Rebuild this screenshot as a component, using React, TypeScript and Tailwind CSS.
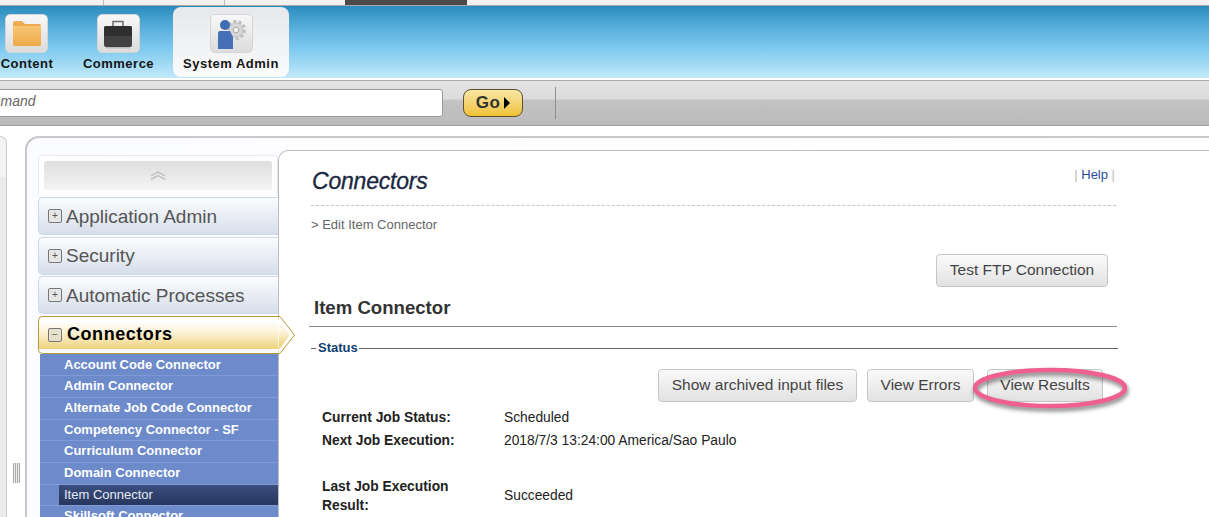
const font = { fontFamily: '"Liberation Sans", Arial, sans-serif' };

const subItems = [
  "Account Code Connector",
  "Admin Connector",
  "Alternate Job Code Connector",
  "Competency Connector - SF",
  "Curriculum Connector",
  "Domain Connector",
  "Item Connector",
  "Skillsoft Connector",
];

function FolderIcon() {
  return (
    <svg width="28" height="25" viewBox="0 0 28 25">
      <defs>
        <linearGradient id="folderFill" x1="0" y1="0" x2="0" y2="1">
          <stop offset="0" stopColor="#f8c670" />
          <stop offset="1" stopColor="#eeaa4c" />
        </linearGradient>
      </defs>
      <path d="M0 2a2 2 0 0 1 2-2h7l3 3h14a2 2 0 0 1 2 2v18a2 2 0 0 1-2 2H2a2 2 0 0 1-2-2z" fill="#eeac52" />
      <path d="M0 5h28v18a2 2 0 0 1-2 2H2a2 2 0 0 1-2-2z" fill="url(#folderFill)" />
    </svg>
  );
}

function CaseIcon() {
  return (
    <svg width="30" height="30" viewBox="0 0 30 30">
      <path d="M10 7V2.5h10V7" fill="none" stroke="#6b6b6b" strokeWidth="1.5" />
      <rect x="1" y="7" width="28" height="21" rx="2" fill="#414141" />
      <rect x="1" y="7" width="28" height="10" rx="2" fill="#2f2f2f" />
      <rect x="3" y="28" width="24" height="1.5" fill="#bbb" />
    </svg>
  );
}

function AdminIcon() {
  return (
    <svg width="32" height="34" viewBox="0 0 32 34">
      <circle cx="21" cy="13" r="7" fill="#d6d6d6" stroke="#c4c4c4" strokeWidth="1" />
      <circle cx="21" cy="13" r="8.5" fill="none" stroke="#bdbdbd" strokeWidth="3" strokeDasharray="3 2.3" />
      <circle cx="21" cy="13" r="2.8" fill="#f2f2f2" stroke="#aaa" strokeWidth="1" />
      <circle cx="10" cy="8" r="5" fill="#3f6db5" />
      <path d="M3 16a2 2 0 0 1 2-2h10l3 6v12H3z" fill="#4570b8" />
    </svg>
  );
}

function NavTile({ label, active, icon }: { label: string; active?: boolean; icon: React.ReactNode }) {
  return (
    <div className={`flex flex-col items-center rounded-lg pt-[7px] h-[70px] ${active ? "w-[116px] bg-gradient-to-b from-[#e6e8ec] to-[#fafbfc]" : ""}`}>
      <div className="flex items-center justify-center w-[43px] h-[39px] rounded-[5px] border border-[#d5d5d5] bg-gradient-to-b from-[#f8f8f8] to-[#dcdcdc]">
        {icon}
      </div>
      <span className="mt-[3px] text-[13px] font-bold text-[#151515] leading-[16px] tracking-[0.5px] whitespace-nowrap">{label}</span>
    </div>
  );
}

function AccordionItem({ label }: { label: string }) {
  return (
    <div className="flex items-center h-[38px] pl-[9px] mb-[1.5px] rounded-l-[5px] border border-r-0 border-[#cdd8ec] bg-gradient-to-b from-[#fbfcfe] to-[#d7deeb]">
      <span className="flex items-center justify-center w-[14px] h-[14px] rounded-[2px] border border-[#777] bg-[#e6e6e6] text-[10px] leading-none text-[#555]">+</span>
      <span className="ml-[4px] text-[19px] text-[#555] leading-none whitespace-nowrap">{label}</span>
    </div>
  );
}

function GrayButton({ label, className = "" }: { label: string; className?: string }) {
  return (
    <button className={`h-[33px] rounded-[4px] border border-[#c6c6c6] bg-gradient-to-b from-[#fafafa] to-[#e2e2e2] pb-[1px] text-[15.5px] text-[#444] whitespace-nowrap ${className}`}>
      {label}
    </button>
  );
}

export default function App() {
  return (
    <div style={font} className="h-[517px] w-[1209px] overflow-hidden bg-white flex flex-col">
      {/* top tabs */}
      <div className="flex h-[6px] bg-[#f2f2f2] border-b border-[#a9a9a9]">
        <div className="w-[104px] border-r border-[#bbb]" />
        <div className="w-[121px] border-r border-[#bbb]" />
        <div className="w-[120px]" />
        <div className="w-[122px] bg-[#4a4a4a]" />
      </div>

      {/* module nav */}
      <div className="flex items-start h-[74px] pt-[1px] pl-[2px] border-b-2 border-white bg-[linear-gradient(#2a8cbd_0%,#5fb4e0_35%,#7fcaf0_60%,#c3e8fa_100%)]">
        <div className="w-[54px] -ml-[2px] flex justify-center"><NavTile label="Content" icon={<FolderIcon />} /></div>
        <div className="w-[119px] pl-[10px] flex justify-center"><NavTile label="Commerce" icon={<CaseIcon />} /></div>
        <NavTile label="System Admin" active icon={<AdminIcon />} />
      </div>

      {/* command bar */}
      <div className="flex items-center h-[46px] border-t border-[#a8a8a8] border-b border-b-[#a0a0a0] bg-[linear-gradient(#e4e4e4_0%,#dcdcdc_40%,#c2c2c2_45%,#bcbcbc_100%)]">
        <div className="flex items-center w-[444px] h-[28px] bg-white border border-[#9a9a9a] rounded-r-[3px] -ml-px overflow-hidden">
          <span className="text-[14px] italic text-[#666] -ml-[29px] -mt-[4px]">Command</span>
        </div>
        <button className="ml-[20px] flex items-center justify-center w-[60px] h-[28px] rounded-[8px] border border-[#5c5230] bg-gradient-to-b from-[#f9e7a4] to-[#efc231] text-[17px] font-bold tracking-[0.5px] text-[#333]">
          Go
          <span className="ml-[4px] w-0 h-0 border-y-[6px] border-y-transparent border-l-[6px] border-l-black" />
        </button>
        <div className="ml-[32px] w-px h-[32px] bg-[#8f8f8f]" />
      </div>

      {/* body */}
      <div className="flex-1 flex pt-[10px] min-h-0 relative">
        <div className="w-[7px] h-full rounded-tr-[8px] border-t border-r border-[#ccc] bg-[linear-gradient(#f3f3f3_0,#f3f3f3_40px,#ebebeb_40px)]" />
        <div className="w-[18px] flex justify-center pt-[327px]">
          <div className="w-[7px] h-[20px] bg-[repeating-linear-gradient(90deg,#aaa_0,#aaa_1px,#eee_1px,#eee_2px)]" />
        </div>
        <div className="flex-1 rounded-tl-[14px] border-t-2 border-l-2 border-[#c8c8c8] bg-gradient-to-r from-[#fbfcff] to-white flex pl-[11px] min-w-0">
          {/* sidebar */}
          <div className="w-[240px] pt-[17px] shrink-0">
            <div className="h-[42px] rounded-t-[4px] border border-b-0 border-[#e6e9f2] pl-[5px] pr-[5px] pt-[5px] bg-white">
              <div className="flex items-center justify-center h-[29px] rounded-[3px] bg-gradient-to-b from-[#dedede] to-[#f4f4f4]">
                <svg width="16" height="9" viewBox="0 0 16 9" fill="none" stroke="#bbb" strokeWidth="1.4">
                  <path d="M1 5l7-4 7 4M1 8.5l7-4 7 4" />
                </svg>
              </div>
            </div>
            <AccordionItem label="Application Admin" />
            <AccordionItem label="Security" />
            <AccordionItem label="Automatic Processes" />
            <div className="relative h-[38px] mt-[0.5px] pl-[9px] flex items-center rounded-l-[5px] border border-r-0 border-[#b59b3a] bg-[linear-gradient(#fff_12%,#fbf1d2_45%,#f0d27e_88%,#fff_88%)]">
              <span className="flex items-center justify-center w-[14px] h-[14px] rounded-[2px] border border-[#777] bg-[#e6e0cc] text-[10px] leading-none text-[#555]">−</span>
              <span className="ml-[5px] -mt-[2px] text-[18px] font-bold text-black leading-none tracking-[0.55px]">Connectors</span>
              <svg className="absolute left-[239px] -top-px" width="18" height="38" viewBox="0 0 18 38">
                <defs>
                  <linearGradient id="goldFill" x1="0" y1="0" x2="0" y2="1">
                    <stop offset="0.12" stopColor="#ffffff" />
                    <stop offset="0.45" stopColor="#fbf1d2" />
                    <stop offset="0.88" stopColor="#f0d27e" />
                  </linearGradient>
                </defs>
                <path d="M0 .5h2L16.5 19 2 37.5H0z" fill="#fff" stroke="#b59b3a" />
                <path d="M0 4h1.5L12 19 1.5 33H0z" fill="url(#goldFill)" />
                <path d="M-1 1.2h1.6v35.6H-1z" fill="#fff" />
              </svg>
            </div>
            <div className="ml-[2px] pt-[1px] bg-[#6d8acb]">
              {subItems.map((item) => (
                <div key={item} className="h-[21.7px] pl-[19px] border-b border-[#7f9ad4]">
                  <div className={`h-full pl-[5px] text-[13px] font-bold leading-[20px] whitespace-nowrap ${item === "Item Connector" ? "bg-gradient-to-b from-[#3a4d7d] to-[#27375f] text-[#e6eaf5] font-normal" : "text-white"}`}>
                    {item}
                  </div>
                </div>
              ))}
            </div>
          </div>

          {/* main panel */}
          <div className="flex-1 mt-[12px] rounded-tl-[10px] border-t border-l border-[#bdbdbd] bg-white pl-[32px] min-w-0">
            <div className="w-[805px] flex items-start justify-between pt-[17px] h-[55px] border-b border-dashed border-[#c5c5c5]">
              <h1 className="ml-[1px] text-[23px] italic text-[#1b2740] leading-[26px] -tracking-[0.2px] [-webkit-text-stroke:0.3px_#1b2740]">Connectors</h1>
              <div className="text-[13px] text-[#bbb] -mt-[3px] pr-[1px]">| <span className="text-[#2a4b9b]">Help</span> |</div>
            </div>
            <div className="mt-[11px] text-[13px] text-[#666] leading-[16px]">&gt; Edit Item Connector</div>
            <div className="w-[797px] flex justify-end mt-[21px]">
              <GrayButton label="Test FTP Connection" className="w-[172px]" />
            </div>
            <h2 className="mt-[10px] ml-[3px] text-[18.6px] font-bold text-[#333] leading-[22px]">Item Connector</h2>
            <div className="mt-[7px] w-[808px] -ml-[2px] border-t border-[#8a8a8a]" />
            <div className="mt-[13px] flex items-center w-[807px]">
              <span className="w-[5px] border-t border-[#666]" />
              <span className="ml-[2px] text-[13px] font-bold text-[#0f3f73] leading-[16px]">Status</span>
              <span className="flex-1 ml-[1px] border-t border-[#666]" />
            </div>
            <div className="mt-[13px] w-[792px] flex justify-end gap-[10px]">
              <GrayButton label="Show archived input files" className="w-[199px]" />
              <GrayButton label="View Errors" className="w-[107px]" />
              <div className="relative w-[116px] ml-[3px]">
                <GrayButton label="View Results" className="w-full" />
                <svg className="absolute -left-[14px] -top-[6px] drop-shadow-[1px_3px_2px_rgba(0,0,0,0.5)]" width="156" height="48" viewBox="0 0 156 48" fill="none">
                  <ellipse cx="77" cy="25" rx="75" ry="18" stroke="#f0608f" strokeWidth="4.5" />
                </svg>
              </div>
            </div>
            <div className="mt-[6px] ml-[11px] grid grid-cols-[182px_1fr] text-[13.8px] leading-[19px] text-[#222]">
              <div className="font-bold h-[23px]">Current Job Status:</div>
              <div>Scheduled</div>
              <div className="font-bold h-[46px]">Next Job Execution:</div>
              <div>2018/7/3 13:24:00 America/Sao Paulo</div>
              <div className="font-bold w-[150px]">Last Job Execution Result:</div>
              <div className="self-center -mt-[1px]">Succeeded</div>
            </div>
          </div>
        </div>
      </div>
    </div>
  );
}
